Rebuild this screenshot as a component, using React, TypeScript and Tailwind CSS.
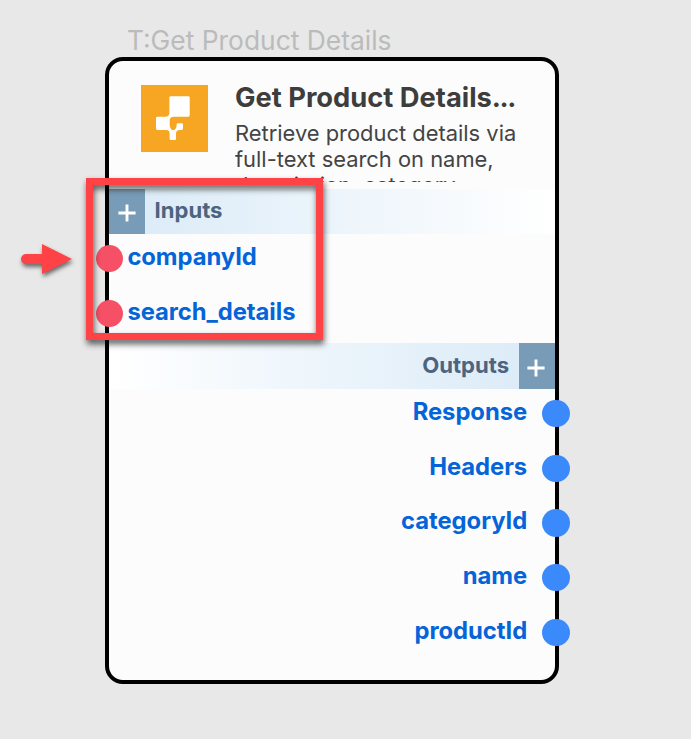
const inputs = ['companyId', 'search_details'];
const outputs = ['Response', 'Headers', 'categoryId', 'name', 'productId'];

function Plus() {
  return (
    <svg width="18" height="18" viewBox="0 0 18 18" aria-hidden="true">
      <path d="M9 0.4V17.6M0.4 9H17.6" stroke="#fff" strokeWidth="2.9" />
    </svg>
  );
}

function Logo() {
  return (
    <svg width="67" height="67" viewBox="0 0 67 67" className="shrink-0" aria-hidden="true">
      <path d="M0 0H67V67H0Z" fill="#f6a623" />
      <path
        d="M30 11.3H47.3Q48.7 11.3 48.7 12.7V30.3Q48.7 31.7 47.3 31.7H33Q29 31.7 28.7 35V40Q29 44.5 32 45.3Q35.3 44.5 35.6 41V39.6Q35.6 38.3 37 38.3H40.6Q42 38.3 42 39.6V43.6Q42 45 40.6 45H38Q35 45.8 35 48.5V53.7Q35 55 33.6 55H30Q28.6 55 28.6 53.7V48.5Q28.6 45 25.5 45H16.4Q15 45 15 43.6V33.2Q15 31.8 16.4 31.8H25Q28.4 31 28.4 28V12.7Q28.4 11.3 30 11.3Z"
        fill="#fff"
      />
    </svg>
  );
}

export default function App() {
  return (
    <div className="relative h-[739px] w-[691px] overflow-hidden bg-[#e8e8e8] pl-[105px] pt-6 font-['Inter',sans-serif]">
      <div className="h-[33px] whitespace-nowrap pl-[22px] text-[26.4px] leading-8 text-[#bbbbbb]">T:Get Product Details</div>
      <section className="h-[627px] w-[454px] rounded-[18px] border-4 border-black bg-[#fcfcfc]">
        <header className="flex h-[128px] pl-8 pt-6">
          <Logo />
          <div className="ml-[27px] h-[97px] w-[292px] overflow-hidden">
            <h1 className="whitespace-nowrap text-[27.3px] font-bold leading-[26px] text-[#3d3d3d]">
              Get Product Details<span className="tracking-[-1.4px]">...</span>
            </h1>
            <p className="mt-[9px] text-[21.9px] leading-[26px] text-[#444444]">
              Retrieve product details via
              <br />
              full-text search on name,
              <br />
              description, category,
            </p>
          </div>
        </header>
        <div className="flex h-[45px] bg-linear-to-r from-[#d9eaf7] to-white">
          <div className="flex w-9 items-center justify-center bg-[#789cb7] pt-[3px]"><Plus /></div>
          <h2 className="ml-[9.5px] text-[22.1px] font-bold leading-[42px] text-[#4c6480]">Inputs</h2>
        </div>
        <ul className="h-[109px]">
          {inputs.map((name) => (
            <li key={name} className="flex h-[54.7px] items-center">
              <span className="-ml-[13px] mt-[-5.4px] size-[27.4px] shrink-0 rounded-full bg-[#f55066]" />
              <span className="-mt-[9px] ml-1 text-[23.8px] font-bold leading-7 tracking-[-0.06px] text-[#0565d8]">{name}</span>
            </li>
          ))}
        </ul>
        <div className="flex h-[46px] justify-end bg-linear-to-l from-[#d9eaf7] to-white">
          <h2 className="mr-[9.5px] text-[22.1px] font-bold leading-[44px] text-[#4c6480]">Outputs</h2>
          <div className="flex w-[36.4px] items-center justify-center bg-[#789cb7] pr-[1.5px] pt-[3px]"><Plus /></div>
        </div>
        <ul>
          {outputs.map((name) => (
            <li key={name} className="flex h-[54.7px] items-center justify-end">
              <span className="-mt-[9px] mr-[15px] text-[23.8px] font-bold leading-7 tracking-[-0.04px] text-[#0565d8]">{name}</span>
              <span className="-mr-[14.5px] mt-[-5.4px] size-[27.4px] shrink-0 rounded-full bg-[#3b8afb]" />
            </li>
          ))}
        </ul>
      </section>
      <div className="absolute left-[86px] top-[178px] h-[162px] w-[237px] border-7 border-[#ff4245] drop-shadow-[1px_4px_3px_rgba(0,0,0,0.65)]" />
      <svg className="absolute left-[20px] top-[242px] overflow-visible drop-shadow-[1px_3px_2px_rgba(0,0,0,0.55)]" width="54" height="34" viewBox="0 0 54 34" aria-hidden="true">
        <path d="M6 12H22V2L52 17L22 32V22H6A5 5 0 0 1 6 12Z" fill="#ff4245" />
      </svg>
    </div>
  );
}
